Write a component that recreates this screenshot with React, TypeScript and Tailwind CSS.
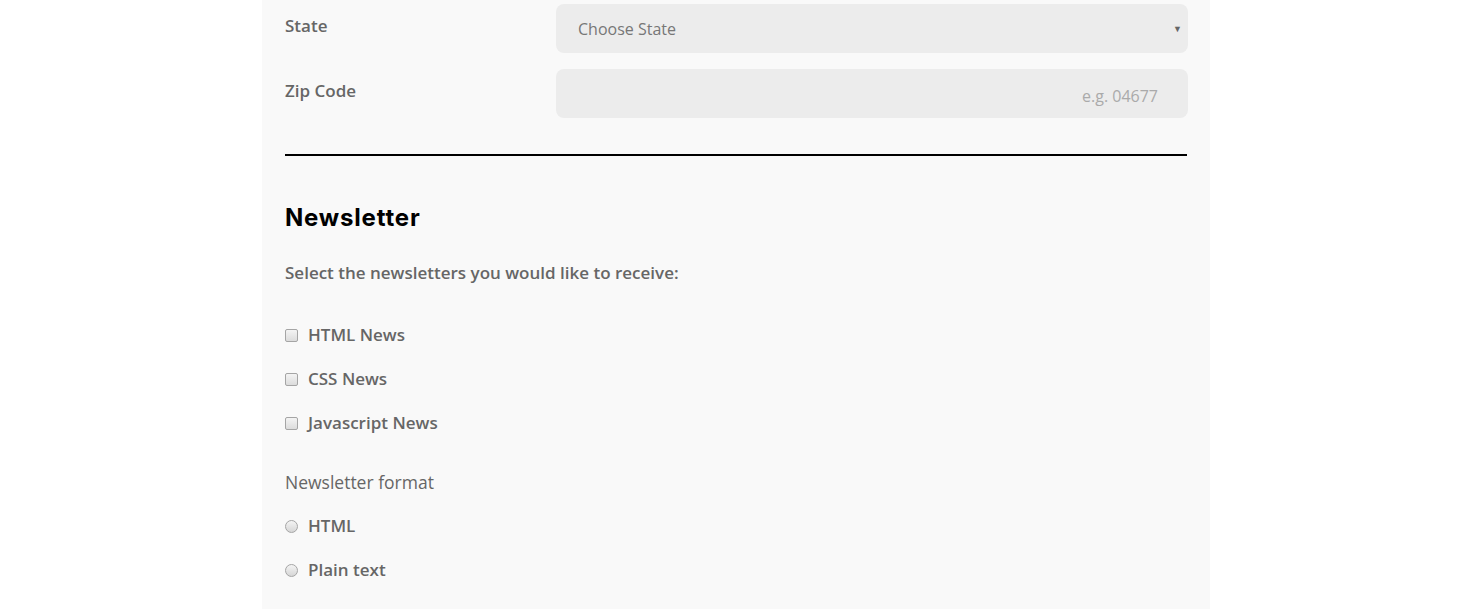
import React from "react";

const body = "font-['Open_Sans',sans-serif]";

function FieldRow({ label, children }: { label: string; children: React.ReactNode }) {
    return (
        <div className="flex items-start">
            <label className="w-[271px] shrink-0 pt-[9px] text-[17px] font-semibold leading-[26px] text-[#666]">{label}</label>
            <div className="flex-1">{children}</div>
        </div>
    );
}

function Check({ label }: { label: string }) {
    return (
        <label className="flex h-[44px] items-center gap-[10px]">
            <span className="h-[13px] w-[13px] rounded-[2px] border border-[#a5a5a5] bg-gradient-to-b from-[#f4f4f4] to-[#dcdcdc]" />
            <span className="text-[17px] font-semibold text-[#666]">{label}</span>
        </label>
    );
}

function Radio({ label }: { label: string }) {
    return (
        <label className="flex h-[44px] items-center gap-[10px]">
            <span className="h-[13px] w-[13px] rounded-full border border-[#a5a5a5] bg-gradient-to-b from-[#f4f4f4] to-[#d6d6d6]" />
            <span className="text-[17px] font-semibold text-[#666]">{label}</span>
        </label>
    );
}

export default function App() {
    return (
        <div className={`min-h-screen bg-white ${body}`}>
            <div className="w-[948px] bg-[#f9f9f9] px-[23px] pt-[4px] pb-[30px]" style={{ marginLeft: 262 }}>
                <div className="flex flex-col gap-[16px]">
                    <FieldRow label="State">
                        <div className="relative flex h-[49px] w-[632px] items-center rounded-[8px] bg-[#ececec] pl-[22px] text-[16px] text-[#777]">
                            Choose State
                            <span className="absolute right-[6px] top-[18px] text-[9px] text-[#666]">▼</span>
                        </div>
                    </FieldRow>
                    <FieldRow label="Zip Code">
                        <div className="flex h-[49px] w-[632px] items-center justify-end rounded-[8px] bg-[#ececec] pr-[30px] pt-[4px] text-[16px] text-[#aaa]">
                            e.g. 04677
                        </div>
                    </FieldRow>
                </div>

                <div className="mt-[36px] h-[2px] w-[902px] bg-black" />

                <h2 className="mt-[46px] font-['Inter',sans-serif] text-[24px] font-bold leading-[32px] tracking-[0.8px] text-black">Newsletter</h2>

                <p className="mt-[27px] text-[17px] font-semibold leading-[24px] text-[#666]">Select the newsletters you would like to receive:</p>

                <div className="mt-[28px] flex flex-col">
                    <Check label="HTML News" />
                    <Check label="CSS News" />
                    <Check label="Javascript News" />
                </div>

                <p className="mt-[25px] text-[17.5px] leading-[24px] text-[#666]">Newsletter format</p>

                <div className="mt-[10px] flex flex-col">
                    <Radio label="HTML" />
                    <Radio label="Plain text" />
                </div>
            </div>
        </div>
    );
}
